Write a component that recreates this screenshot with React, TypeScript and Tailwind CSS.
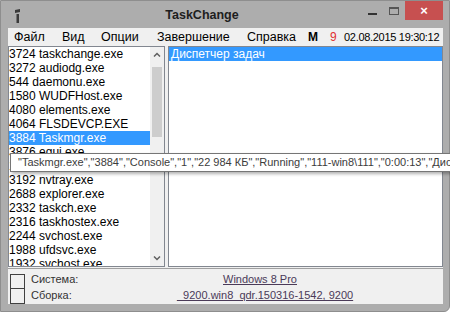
import React from "react";

const processes = [
    "3724 taskchange.exe",
    "3272 audiodg.exe",
    "544 daemonu.exe",
    "1580 WUDFHost.exe",
    "4080 elements.exe",
    "4064 FLSDEVCP.EXE",
    "3884 Taskmgr.exe",
    "3876 egui.exe",
    "1412 ekrn.exe",
    "3192 nvtray.exe",
    "2688 explorer.exe",
    "2332 taskch.exe",
    "2316 taskhostex.exe",
    "2244 svchost.exe",
    "1988 ufdsvc.exe",
    "1932 svchost.exe",
];

const menu = [
    { label: "Файл", w: "w-[48px]" },
    { label: "Вид", w: "w-[39px]" },
    { label: "Опции", w: "w-[56px]" },
    { label: "Завершение", w: "w-[90px]" },
    { label: "Справка", w: "w-[61px]" },
];

const App: React.FC = () => (
    <div className="relative w-[450px] h-[312px] overflow-hidden bg-white font-['Liberation_Sans',Arial,sans-serif]">
        <div className="flex flex-col w-[450px] h-[312px] bg-[#adadad] border border-[#8e8e8e] rounded-br-[6px]">
            {/* title bar */}
            <div className="relative flex items-center h-[27px] shrink-0">
                <svg className="ml-[12px] mt-[2px]" width="10" height="14" viewBox="0 0 10 14">
                    <path d="M2 1 L7 0 L7 3 L2 4 Z" fill="#3a3a3a" />
                    <rect x="3.5" y="5" width="2.5" height="9" fill="#3a3a3a" />
                </svg>
                <div className="flex-1 text-center text-[12.5px] font-bold text-[#1e1e1e] pl-[20px] pt-[1px]">TaskChange</div>
                <div className="flex items-start self-start h-[20px]">
                    <div className="w-[22px] h-[20px] flex items-center justify-center">
                        <div className="w-[9px] h-[2px] bg-[#333] mt-[6px]" />
                    </div>
                    <div className="w-[22px] h-[20px] flex items-center justify-center">
                        <div className="w-[10px] h-[8px] border border-[#555] border-t-2" />
                    </div>
                    <div className="w-[38px] h-[19px] bg-[#c75050] flex items-center justify-center text-white text-[13px] font-bold leading-none">
                        ×
                    </div>
                    <div className="w-[6px]" />
                </div>
            </div>

            {/* client area */}
            <div className="flex flex-col mx-[7px] w-[435px] h-[276px] bg-[#f0f0f0]">
                {/* menu */}
                <div className="flex items-center h-[18px] pl-[6px] text-[12.5px] text-black whitespace-nowrap">
                    {menu.map((m) => (
                        <div key={m.label} className={m.w}>{m.label}</div>
                    ))}
                    <div className="w-[22px] font-bold text-[12px]">М</div>
                    <div className="w-[14px] text-[#e03030] text-[12px]">9</div>
                    <div className="text-[11px] tracking-[-0.3px]">02.08.2015 19:30:12</div>
                </div>

                {/* lists */}
                <div className="flex h-[221px] gap-[3px]">
                    <div className="flex w-[157px] bg-white border border-[#828790]">
                        <div className="flex-1 overflow-hidden">
                            {processes.map((p, i) => (
                                <div
                                    key={p + i}
                                    className={
                                        "h-[14px] leading-[14px] text-[12px] whitespace-nowrap " +
                                        (i === 6 ? "bg-[#3399ff] text-white" : "text-black")
                                    }
                                >
                                    {p}
                                </div>
                            ))}
                        </div>
                        <div className="flex flex-col w-[14px] bg-[#f0f0f0] items-center">
                            <svg className="mt-[5px]" width="8" height="5" viewBox="0 0 8 5">
                                <path d="M1 4.5 L4 1.5 L7 4.5" stroke="#606060" strokeWidth="1.5" fill="none" />
                            </svg>
                            <div className="w-[10px] h-[70px] mt-[10px] bg-[#cdcdcd]" />
                            <div className="flex-1" />
                            <svg className="mb-[5px]" width="8" height="5" viewBox="0 0 8 5">
                                <path d="M1 0.5 L4 3.5 L7 0.5" stroke="#606060" strokeWidth="1.5" fill="none" />
                            </svg>
                        </div>
                    </div>
                    <div className="flex-1 bg-white border border-[#828790]">
                        <div className="h-[14px] leading-[14px] text-[12px] text-white bg-[#3399ff] pl-[2px]">Диспетчер задач</div>
                    </div>
                </div>

                {/* status */}
                <div className="flex flex-1 border-t border-[#a0a0a0] mt-[1px]">
                    <div className="flex flex-col ml-[2px] mt-[5px]">
                        <div className="w-[15px] h-[15px] border border-[#404040] bg-[#f0f0f0]" />
                        <div className="w-[15px] h-[15px] border border-[#404040] border-t-0 bg-[#f0f0f0]" />
                    </div>
                    <div className="flex flex-col mt-[2px] ml-[6px] text-[11px] text-[#333]">
                        <div className="h-[16px] leading-[16px] flex">
                            <span className="w-[192px]">Система:</span>
                            <span className="underline text-[#4a3a58]">Windows 8 Pro</span>
                        </div>
                        <div className="h-[16px] leading-[16px] flex">
                            <span className="w-[146px]">Сборка:</span>
                            <span className="underline text-[#4a3a58]">_9200.win8_qdr.150316-1542, 9200</span>
                        </div>
                    </div>
                </div>
            </div>
        </div>

        {/* tooltip */}
        <div className="absolute left-[10px] top-[153px] w-[460px] h-[19px] bg-white border border-[#767676] shadow-[2px_2px_3px_rgba(0,0,0,0.3)] pl-[7px] text-[11px] leading-[17px] text-[#3c3c3c] whitespace-nowrap">
            "Taskmgr.exe","3884","Console","1","22 984 КБ","Running","111-win8\111","0:00:13","Диспетчер задач"
        </div>
    </div>
);

export default App;
